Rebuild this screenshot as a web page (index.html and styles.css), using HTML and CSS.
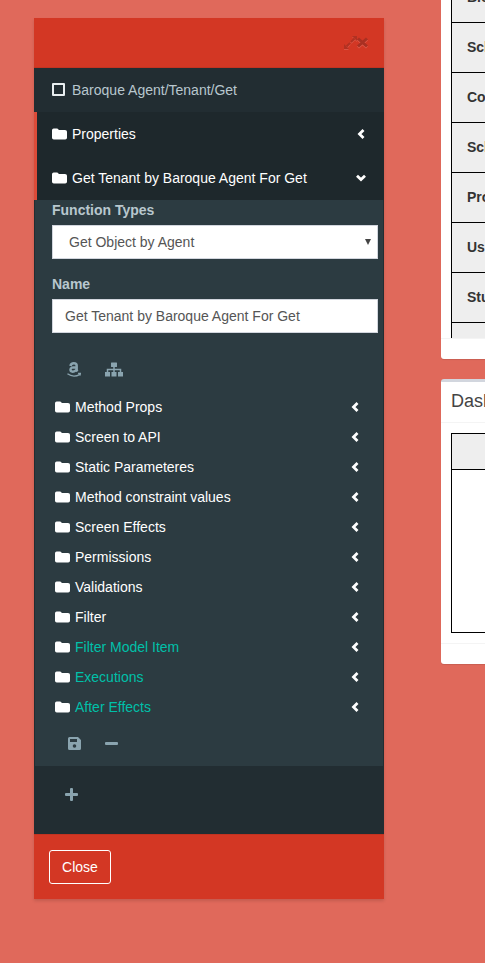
FILE: index.html
```html
<!DOCTYPE html>
<html lang="en">
<head>
<meta charset="utf-8">
<title>Get Tenant</title>
<link rel="stylesheet" href="styles.css">
</head>
<body>
<svg class="symbols" aria-hidden="true">
  <symbol id="folder" viewBox="0 0 15 12"><path d="M0 2.200Q0 .5 1.700.5H5Q6.500.5 6.700 2H13Q15 2 15 3.700V9.800Q15 11.500 13.200 11.500H1.800Q0 11.500 0 9.800Z"/></symbol>
  <symbol id="left" viewBox="0 0 8 10"><path d="M6.500 1 2.500 5 6.500 9" fill="none" stroke="currentColor" stroke-width="2.800"/></symbol>
  <symbol id="down" viewBox="0 0 10 8"><path d="M1 1.700 5 5.500 9 1.700" fill="none" stroke="currentColor" stroke-width="2.800"/></symbol>
</svg>
<div class="page">
  <main class="modal">
    <header class="modal-head">
      <svg class="expand" viewBox="0 0 13 13"><path d="M2.500 10.500 10.500 2.500" stroke="currentColor" stroke-width="2" stroke-dasharray="5 1.300"/><path d="M0 13V8L5 13ZM13 0V5L8 0Z"/></svg>
      <svg class="times" viewBox="0 0 11 11"><path d="M1 1.500 10 9.500M10 1.500 1 9.500" stroke="currentColor" stroke-width="3"/></svg>
    </header>
    <section class="menu">
      <div class="item"><span class="square"></span><span>Baroque Agent/Tenant/Get</span></div>
      <div class="item active"><svg class="folder"><use href="#folder"/></svg><span>Properties</span><svg class="left"><use href="#left"/></svg></div>
      <div class="item active"><svg class="folder"><use href="#folder"/></svg><span>Get Tenant by Baroque Agent For Get</span><svg class="down"><use href="#down"/></svg></div>
      <div class="tree">
        <div class="label">Function Types</div>
        <div class="control select"><span>Get Object by Agent</span><i class="caret"></i></div>
        <div class="label second">Name</div>
        <div class="control"><span>Get Tenant by Baroque Agent For Get</span></div>
        <div class="tools">
          <svg class="amazon" viewBox="0 0 13 14"><path d="M3.200 3.700C3.500 2 4.500 1.200 6.300 1.200c1.800 0 2.700.8 2.700 2.300v3.400c0 .8.200 1.200.8 1.800M9 4.900C5 4.700 3.200 5.500 3.200 7.100c0 1.300.8 1.900 2 1.900 2.200 0 3.800-1.400 3.800-3.100" fill="none" stroke="currentColor" stroke-width="2.300"/><path d="M.4 11Q6 15 12 11.500M10.300 10.700H12.500L12 12.700" fill="none" stroke="currentColor" stroke-width="1.200"/></svg>
          <svg class="sitemap" viewBox="0 0 18 15"><path d="M6 1Q6 .5 6.500.5H11.500Q12 .5 12 1V4.500Q12 5 11.500 5H6.500Q6 5 6 4.500ZM0 10H5V14.500H0ZM6.500 10H11.500V14.500H6.500ZM13 10H18V14.500H13Z"/><path d="M9 5V10.500M2.500 10.500V7.500H15.500V10.500" fill="none" stroke="currentColor" stroke-width="1.500"/></svg>
        </div>
        <div class="rows">
          <div class="row"><svg class="folder"><use href="#folder"/></svg><span>Method Props</span><svg class="left"><use href="#left"/></svg></div>
          <div class="row"><svg class="folder"><use href="#folder"/></svg><span>Screen to API</span><svg class="left"><use href="#left"/></svg></div>
          <div class="row"><svg class="folder"><use href="#folder"/></svg><span>Static Parameteres</span><svg class="left"><use href="#left"/></svg></div>
          <div class="row"><svg class="folder"><use href="#folder"/></svg><span>Method constraint values</span><svg class="left"><use href="#left"/></svg></div>
          <div class="row"><svg class="folder"><use href="#folder"/></svg><span>Screen Effects</span><svg class="left"><use href="#left"/></svg></div>
          <div class="row"><svg class="folder"><use href="#folder"/></svg><span>Permissions</span><svg class="left"><use href="#left"/></svg></div>
          <div class="row"><svg class="folder"><use href="#folder"/></svg><span>Validations</span><svg class="left"><use href="#left"/></svg></div>
          <div class="row"><svg class="folder"><use href="#folder"/></svg><span>Filter</span><svg class="left"><use href="#left"/></svg></div>
          <div class="row teal"><svg class="folder"><use href="#folder"/></svg><span>Filter Model Item</span><svg class="left"><use href="#left"/></svg></div>
          <div class="row teal"><svg class="folder"><use href="#folder"/></svg><span>Executions</span><svg class="left"><use href="#left"/></svg></div>
          <div class="row teal"><svg class="folder"><use href="#folder"/></svg><span>After Effects</span><svg class="left"><use href="#left"/></svg></div>
        </div>
        <div class="actions">
          <svg class="save" viewBox="0 0 13 13"><path fill-rule="evenodd" d="M1.500 0H10L13 3V11.500Q13 13 11.500 13H1.500Q0 13 0 11.500V1.500Q0 0 1.500 0ZM2 2V5H9V2ZM6.500 7.200A1.800 1.800 0 1 0 6.500 10.800 1.800 1.800 0 1 0 6.500 7.200Z"/></svg>
          <svg class="minus" viewBox="0 0 13 13"><rect y="5" width="13" height="3" rx="1"/></svg>
        </div>
      </div>
      <div class="add"><svg class="plus" viewBox="0 0 13 13"><rect y="5" width="13" height="3" rx="1"/><rect x="5" width="3" height="13" rx="1"/></svg></div>
    </section>
    <footer class="modal-foot"><button class="close">Close</button></footer>
  </main>
  <aside class="side">
    <section class="box first">
      <div class="grid">
        <div class="cell top">Blo</div>
        <div class="cell">Sch</div>
        <div class="cell">Co</div>
        <div class="cell">Sch</div>
        <div class="cell">Pro</div>
        <div class="cell">Us</div>
        <div class="cell">Stu</div>
        <div class="cell last"></div>
      </div>
      <div class="box-foot"></div>
    </section>
    <section class="box second-box">
      <h3>Dash</h3>
      <div class="frame"><div class="frame-head"></div></div>
      <div class="box-foot"></div>
    </section>
  </aside>
</div>
</body>
</html>
```
FILE: styles.css
```css
* { box-sizing: border-box; }
body {
  margin: 0;
  background: #e0695b;
  font: 14px/20px "Liberation Sans", Arial, sans-serif;
  color: #333;
}
svg { display: block; fill: currentColor; flex: none; }
.symbols { display: none; }
.page {
  display: grid;
  grid-template-columns: 350px 44px;
  column-gap: 57px;
  padding-left: 34px;
  height: 963px;
  overflow: hidden;
  align-items: start;
}
.modal { margin-top: 18px; box-shadow: 0 2px 3px rgba(0, 0, 0, .13); }
.modal-head {
  height: 50px;
  background: #d33724;
  border-bottom: 1px solid #c23321;
  padding: 18px 16px 0;
  display: flex;
  justify-content: flex-end;
  color: #a93022;
}
.expand { width: 13px; height: 13px; filter: drop-shadow(0 1px 0 #de5b4c); opacity: .8; }
.times { width: 11px; height: 11px; margin-top: 1px; filter: drop-shadow(0 1px 0 #de5b4c); }
.menu { height: 766px; background: #222d32; color: #fff; }
.item {
  height: 44px;
  padding: 0 18px 0 15px;
  border-left: 3px solid transparent;
  display: flex;
  align-items: center;
  color: #b8c7ce;
}
.active { background: #1e282c; border-left-color: #dd4b39; color: #fff; }
.square { width: 13px; height: 13px; border: 2px solid #e9eef0; border-radius: 1px; margin: -1px 7px 0 0; }
.folder { width: 15px; height: 12px; margin-right: 5px; color: #fff; }
.left { width: 8px; height: 10px; margin-left: auto; margin-right: 1px; color: #fff; }
.down { width: 10px; height: 8px; margin-left: auto; color: #fff; }
.tree { margin: 0 1px; height: 566px; background: #2c3b41; padding: 0 5px 0 17px; }
.label { font-weight: bold; color: #b8c7ce; height: 25px; }
.second { margin-top: 15px; }
.control {
  height: 34px;
  border: 1px solid #d2d6de;
  background: #fff;
  color: #555;
  padding: 0 12px;
  display: flex;
  align-items: center;
}
.select { padding: 0 6px 0 16px; }
.caret { margin-left: auto; border: 3px solid transparent; border-top: 6px solid #444; border-bottom: 0; }
.tools { height: 59px; padding: 29px 0 0 15px; display: flex; color: #8aa4af; }
.amazon { width: 14px; height: 15px; }
.sitemap { width: 18px; height: 15px; margin-left: 24px; }
.row { height: 30px; display: flex; align-items: center; padding: 0 18px 0 2.5px; }
.row .folder { margin-right: 5.5px; }
.teal span { color: #00c0a9; }
.actions { display: flex; padding: 15px 0 0 16px; color: #8aa4af; }
.save { width: 13px; height: 13px; }
.minus { width: 13px; height: 13px; margin-left: 24px; }
.add { padding: 22px 0 0 31px; color: #8aa4af; }
.plus { width: 13px; height: 13px; }
.modal-foot { height: 65px; background: #d33724; border-top: 1px solid #c23321; padding: 15px; }
.close {
  display: block;
  width: 62px;
  height: 34px;
  padding: 0;
  background: transparent;
  border: 1px solid #fff;
  border-radius: 3px;
  color: #fff;
  font: inherit;
}
.box { background: #fff; border-radius: 3px 0 0 3px; box-shadow: 0 1px 1px rgba(0, 0, 0, .1); }
.first { height: 359px; border-top-left-radius: 0; }
.grid { margin-left: 10px; height: 338px; border-left: 1px solid #000; overflow: hidden; background: #eee; }
.cell { height: 50px; padding: 15px 0 0 15px; border-bottom: 1px solid #000; font-weight: bold; line-height: 19px; }
.top { height: 23px; padding-top: 0; line-height: 0; margin-top: -3px; height: 26px; }
.last { height: 15px; border: 0; }
.box-foot { height: 21px; border-top: 1px solid #f4f4f4; }
.second-box { margin-top: 20px; height: 285px; border-top: 3px solid #d2d6de; }
h3 { margin: 0; height: 41px; padding: 10px 0 10px 10px; font-size: 18px; line-height: 18px; font-weight: normal; color: #444; border-bottom: 1px solid #f4f4f4; overflow: hidden; }
.frame { margin: 10px 0 10px 10px; height: 200px; border: 1px solid #000; border-right: 0; }
.frame-head { height: 36px; background: #eee; border-bottom: 1px solid #000; }
```
